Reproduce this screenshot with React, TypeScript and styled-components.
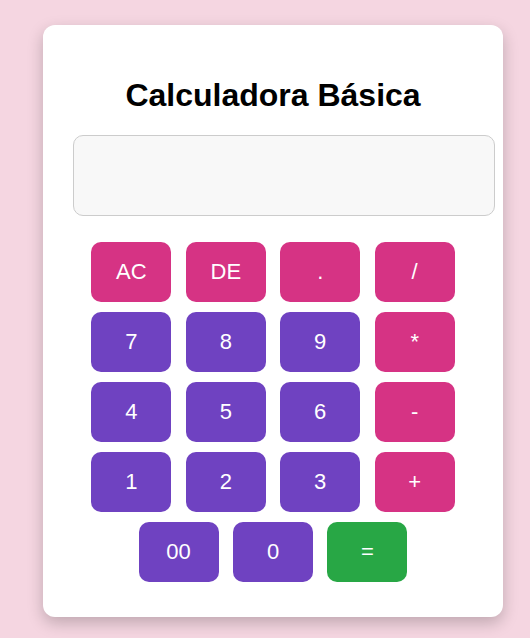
import React, { useState } from "react";
import styled, { createGlobalStyle } from "styled-components";

const Global = createGlobalStyle`
  html, body { margin: 0; padding: 0; }
  body {
    background: #f5d6e1;
    font-family: "Liberation Sans", Arial, sans-serif;
    min-height: 638px;
  }
`;

const Page = styled.div`
  padding: 25px 0 0 43px;
`;

const Card = styled.div`
  width: 460px;
  box-sizing: border-box;
  background: #ffffff;
  border-radius: 12px;
  padding: 30px 30px 35px;
  box-shadow: 0 6px 16px rgba(0, 0, 0, 0.22);
`;

const Title = styled.h1`
  margin: 22px 0 21px;
  font-size: 32px;
  font-weight: bold;
  text-align: center;
  color: #000;
`;

const Display = styled.input`
  display: block;
  width: calc(100% + 22px);
  height: 81px;
  box-sizing: border-box;
  border: 1px solid #cccccc;
  border-radius: 10px;
  background: #f8f8f8;
  font-size: 32px;
  padding: 10px;
  text-align: right;
  font-family: "Liberation Sans", Arial, sans-serif;
  outline: none;
`;

const Keys = styled.div`
  margin-top: 26px;
  display: flex;
  flex-direction: column;
  gap: 10px;
`;

const Row = styled.div`
  display: flex;
  justify-content: center;
  gap: 14.45px;
`;

const Key = styled.button<{ $kind: "op" | "num" | "eq" }>`
  width: 80px;
  height: 60px;
  border: none;
  border-radius: 10px;
  color: #ffffff;
  font-size: 22px;
  font-family: "Liberation Sans", Arial, sans-serif;
  cursor: pointer;
  padding: 0;
  background: ${(p) =>
    p.$kind === "op" ? "#d63384" : p.$kind === "eq" ? "#28a745" : "#6f42c1"};
`;

type K = { label: string; kind: "op" | "num" | "eq" };

const rows: K[][] = [
  [
    { label: "AC", kind: "op" },
    { label: "DE", kind: "op" },
    { label: ".", kind: "op" },
    { label: "/", kind: "op" },
  ],
  [
    { label: "7", kind: "num" },
    { label: "8", kind: "num" },
    { label: "9", kind: "num" },
    { label: "*", kind: "op" },
  ],
  [
    { label: "4", kind: "num" },
    { label: "5", kind: "num" },
    { label: "6", kind: "num" },
    { label: "-", kind: "op" },
  ],
  [
    { label: "1", kind: "num" },
    { label: "2", kind: "num" },
    { label: "3", kind: "num" },
    { label: "+", kind: "op" },
  ],
  [
    { label: "00", kind: "num" },
    { label: "0", kind: "num" },
    { label: "=", kind: "eq" },
  ],
];

export default function App() {
  const [value, setValue] = useState("");
  const press = (l: string) => {
    if (l === "AC") return setValue("");
    if (l === "DE") return setValue((v) => v.slice(0, -1));
    if (l === "=") {
      try {
        // eslint-disable-next-line no-new-func
        setValue(String(Function(`return (${value})`)()));
      } catch {
        setValue("Error");
      }
      return;
    }
    setValue((v) => v + l);
  };
  return (
    <>
      <Global />
      <Page>
        <Card>
          <Title>Calculadora Básica</Title>
          <Display value={value} readOnly />
          <Keys>
            {rows.map((r, i) => (
              <Row key={i}>
                {r.map((k) => (
                  <Key key={k.label} $kind={k.kind} onClick={() => press(k.label)}>
                    {k.label}
                  </Key>
                ))}
              </Row>
            ))}
          </Keys>
        </Card>
      </Page>
    </>
  );
}
